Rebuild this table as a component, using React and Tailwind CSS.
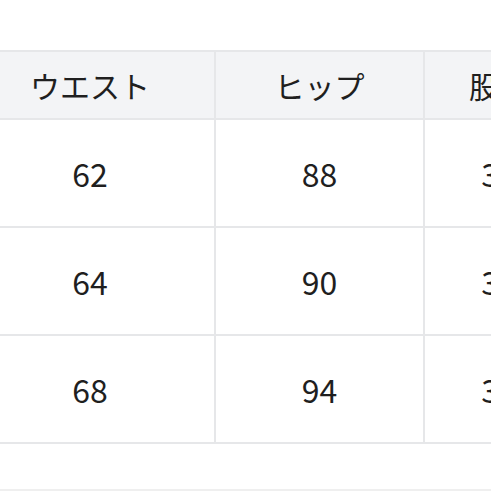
const headers = ['ウエスト', 'ヒップ', '股下'];
const rows = [
  ['62', '88', '36'],
  ['64', '90', '37'],
  ['68', '94', '38'],
];

export default function App() {
  return (
    <div
      className="w-[491px] h-[491px] overflow-hidden bg-white text-[#1f1f1f]"
      style={{ fontFamily: '"Noto Sans CJK JP", "Noto Sans", sans-serif' }}
    >
      <div className="pt-[50px] ml-[-36px]">
        <table className="table-fixed border-collapse w-[609px]">
          <colgroup>
            <col className="w-[250px]" />
            <col className="w-[209px]" />
            <col className="w-[150px]" />
          </colgroup>
          <thead>
            <tr className="h-[68px] bg-[#f3f4f6]">
              {headers.map((h) => (
                <th
                  key={h}
                  className="border-2 border-[#e6e7e9] text-center font-normal text-[30px] leading-none whitespace-nowrap"
                >
                  {h}
                </th>
              ))}
            </tr>
          </thead>
          <tbody>
            {rows.map((r, i) => (
              <tr key={i} className="h-[108px]">
                {r.map((v, j) => (
                  <td
                    key={j}
                    className="border-2 border-[#e6e7e9] text-center text-[32px] leading-none"
                  >
                    {v}
                  </td>
                ))}
              </tr>
            ))}
          </tbody>
        </table>
        <div className="mt-[45px] border-t-2 border-[#efefef]" />
      </div>
    </div>
  );
}
